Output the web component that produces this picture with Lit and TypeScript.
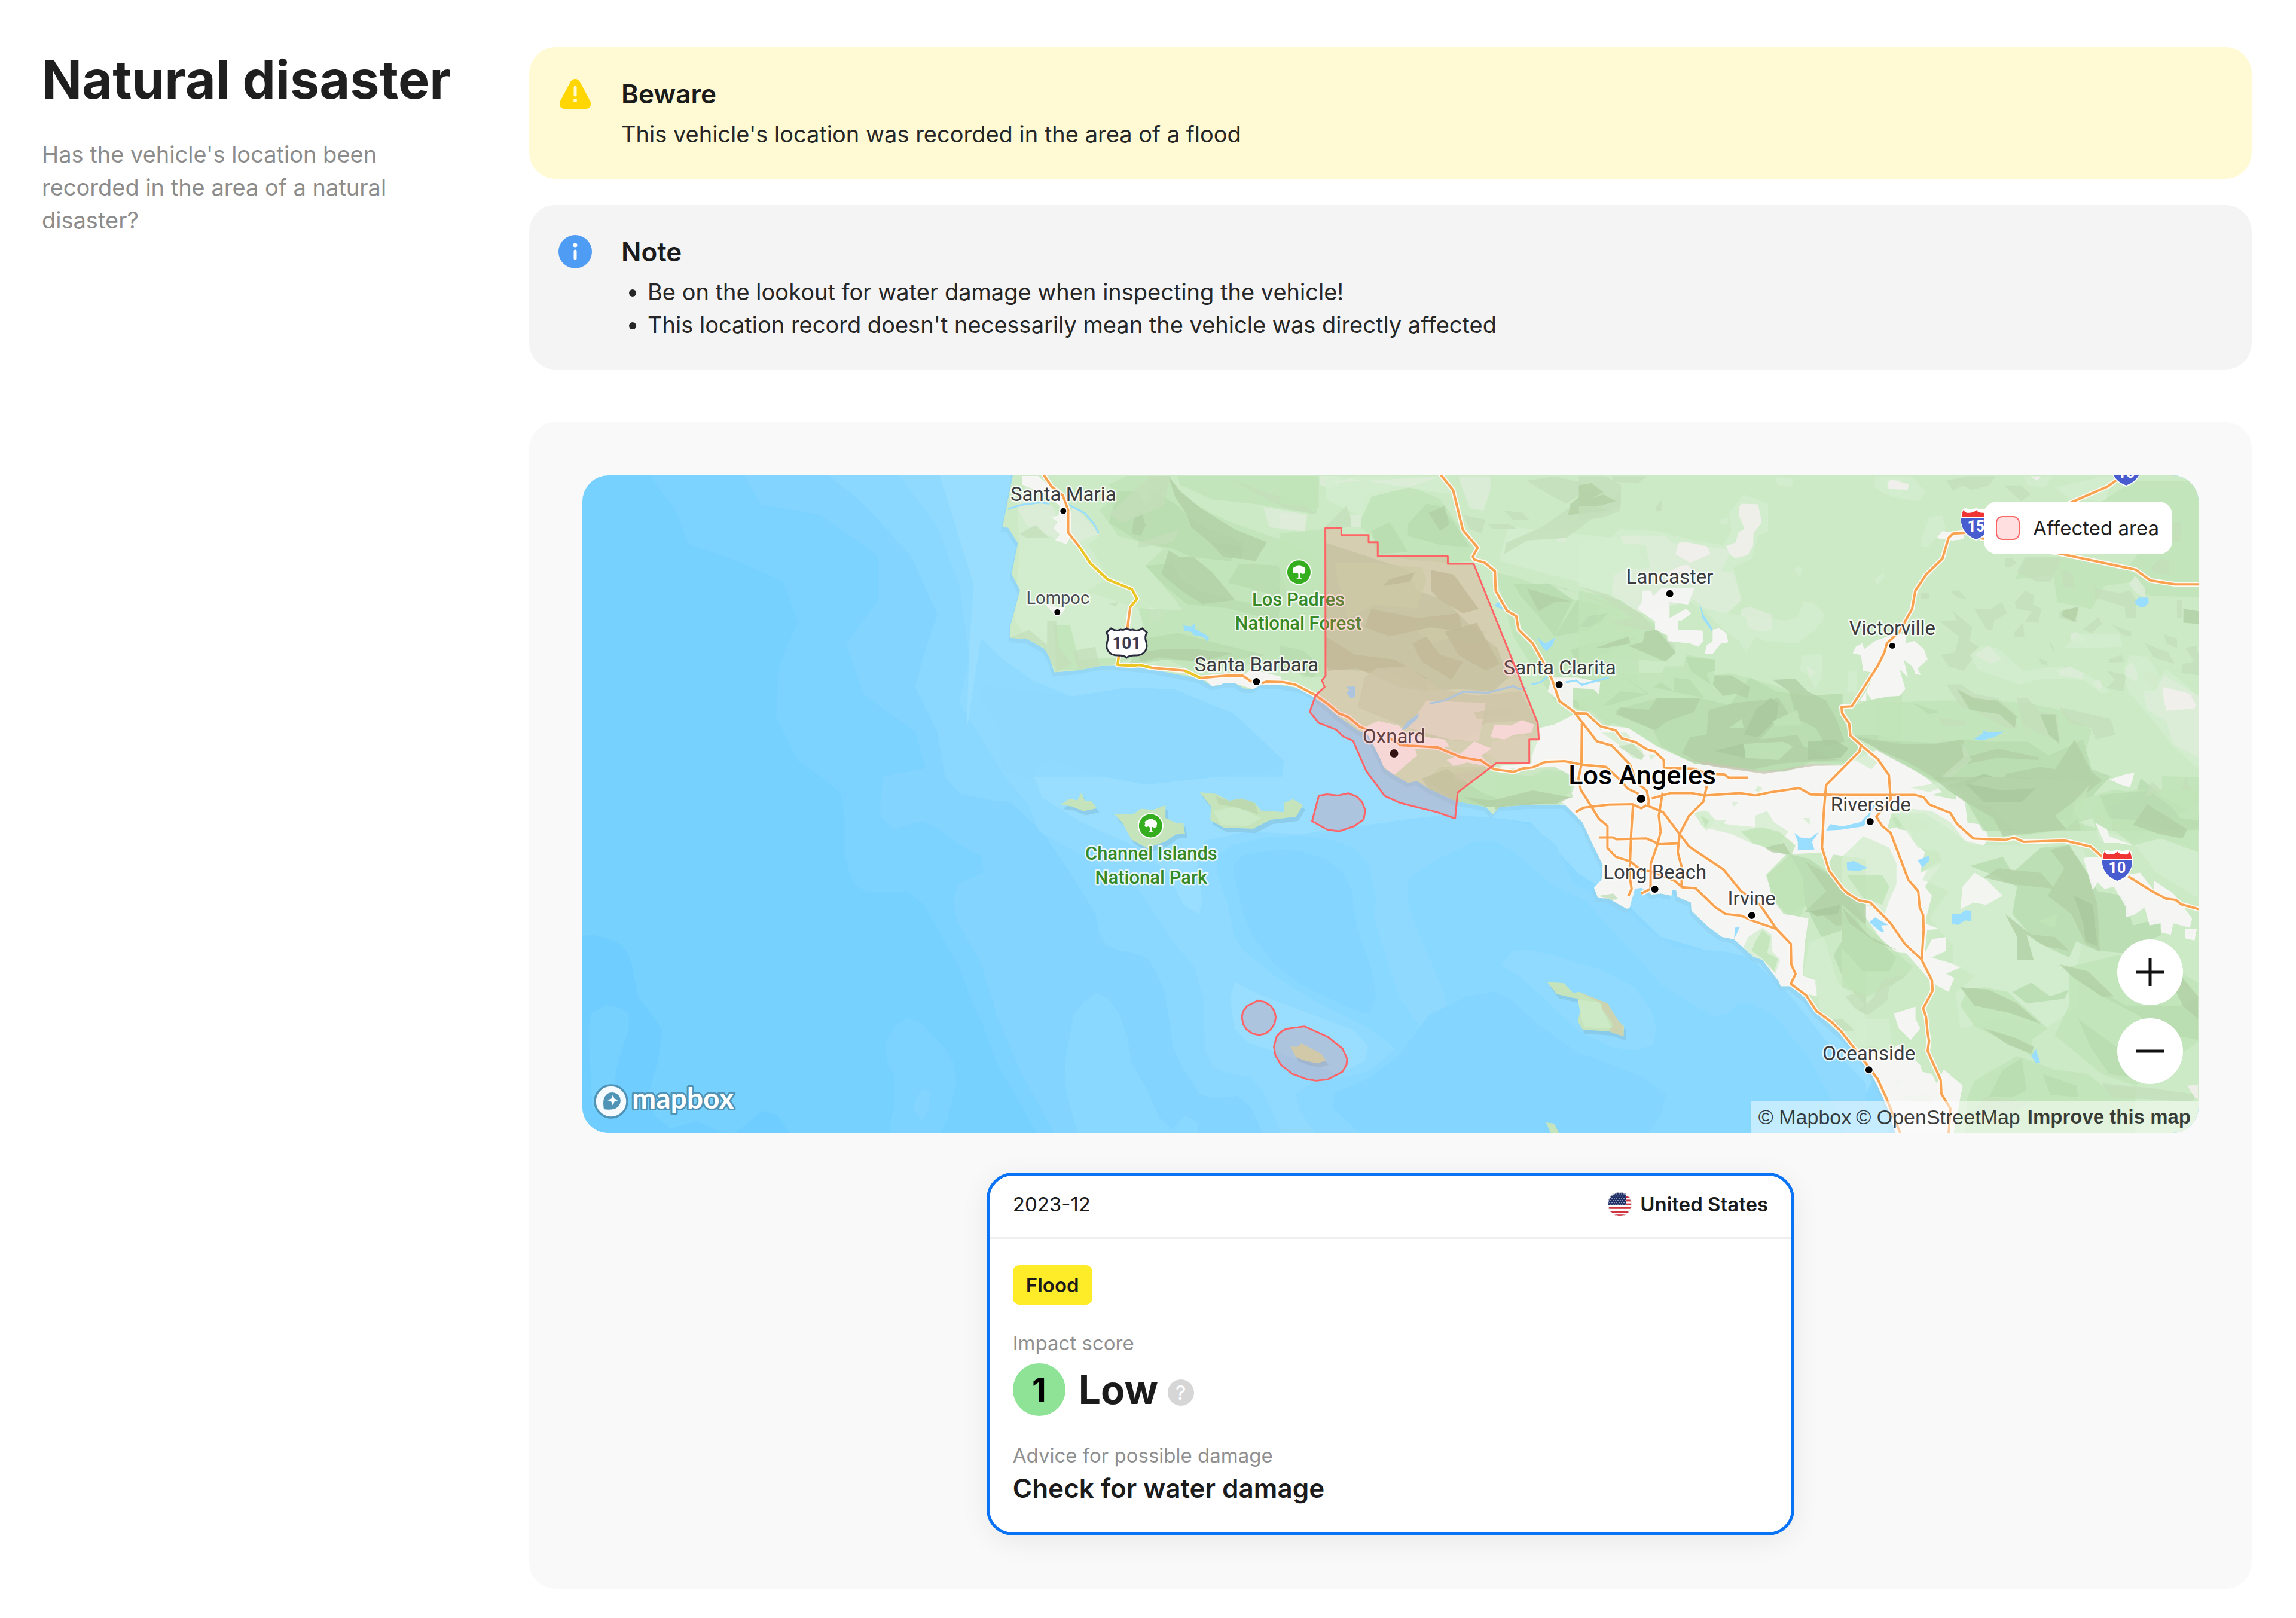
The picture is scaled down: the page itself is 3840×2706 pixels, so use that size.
import { LitElement, html, css, svg } from "lit";
import { customElement, property } from "lit/decorators.js";

/* ---------- map geometry ---------- */

type Sheet = [number, number, number, number];

/* Survey sheets: origin x, origin y and units per grid step on each axis. */
const A: Sheet = [1640, 790, 0.38265, 0.35714];
const B: Sheet = [2140, 790, 0.38265, 0.38265];
const C: Sheet = [2640, 790, 0.34439, 0.38265];
const D: Sheet = [3140, 790, 0.35714, 0.38265];
const E: Sheet = [2500, 1300, 0.39541, 0.38265];
const F: Sheet = [3080, 1300, 0.39541, 0.38265];
const G: Sheet = [1640, 1300, 0.44643, 0.38265];
const H: Sheet = [960, 1300, 0.44643, 0.39541];
const W: Sheet = [0, 0, 2.449, 2.449];

/* Converts "x,y x,y" on a sheet into map coordinates. */
const on = (s: Sheet, pts: string): string =>
  pts
    .trim()
    .split(/\s+/)
    .map((p) => {
      const [x, y] = p.split(",").map(Number);
      return `${(s[0] + x * s[2]).toFixed(1)},${(s[1] + y * s[3]).toFixed(1)}`;
    })
    .join(" ");

const join = (...parts: string[]) => parts.join(" ");

const land = join(
  on(A, "140,0 140,18 95,260 120,262 162,335 135,480 172,555 130,720 130,778 205,785 280,830 300,870 322,940 430,930 520,910 590,908 740,925 960,970 1010,1003 1045,1000 1060,990 1110,990 1150,1015 1190,1018 1230,995 1310,1000 1400,1015 1470,1055"),
  on(B, "165,990 250,1065 340,1130 385,1150 415,1205 440,1255 455,1295 500,1325 560,1360 600,1352 650,1385 770,1440 900,1465 930,1498 960,1465 1100,1455"),
  on(E, "295,122 370,200 410,290 455,385 450,450 418,485 435,530 480,532 555,577 568,575 580,530 590,500 640,490 660,515 700,510 745,520 750,495 765,495 770,525 828,550 830,585 900,655 960,700 1010,710 1090,785 1130,800 1200,895 1207,915 1250,915 1315,970 1355,1030 1450,1115"),
  on(F, "0,1130 60,1200 110,1270 150,1350 190,1440 230,1568"),
  "3150,1960 3800,1960 3800,700"
);

const seaBands: [string, string][] = [
  ["#6fceff", join(on(H, "0,670 70,668 120,682 170,705 200,740 218,800 240,930 332,1070 315,1200 280,1340 300,1430 360,1487 460,1455 545,1500 600,1510 705,1412 760,1430 810,1510 0,1510"))],
  ["#77d1ff", on(H, "65,1000 120,965 165,975 205,1000 205,1070 165,1200 148,1310 130,1400 68,1400 55,1080")],
  ["#7cd3ff", join(on(W, "440,320 462,350 470,372 505,384 535,398 545,425 532,455 530,490 545,520"), on(H, "925,0 1000,70 1015,170 1015,330 1030,400 1050,455 1095,485 1250,485 1310,540 1440,800"), on(G, "-20,1020 0,1060 60,1250 215,1568 1568,1568 1568,0"), "2400,700 1000,700")],
  ["#7cd3ff", on(H, "1165,1130 1200,1055 1250,1020 1300,1042 1390,1150 1422,1210 1432,1290 1400,1440 1370,1510 1180,1510 1200,1380 1200,1265 1172,1205")],
  ["#83d4ff", on(H, "1310,1318 1333,1333 1330,1400 1303,1460 1270,1400 1285,1350")],
  ["#83d4ff", join(on(W, "505,320 520,345 560,352 600,380 600,410 578,440 590,475 625,500 632,525"), on(H, "1157,0 1145,140 1155,180 1200,220 1300,188 1360,215 1440,285 1525,335 1535,405 1440,450 1420,530 1435,610 1530,800"), on(G, "0,810 60,1040 150,1290 280,1568 3600,1568 3600,0"), "3000,700")],
  ["#89d8ff", on(G, "430,945 480,970 520,1040 550,1140 565,1250 620,1360 670,1490 715,1540 765,1480 810,1510 815,1568 365,1568 320,1370 315,1250 348,1040 385,985")],
  ["#8ad8ff", join(on(W, "560,320 590,345 622,380 640,420 630,450 625,470 640,500"), on(H, "1390,0 1450,75 1568,100"), on(G, "110,110 230,240 330,410 430,600 445,690 470,735 510,757 570,768 625,795 655,850 690,940 720,1180 760,1280 820,1385 870,1405 960,1395 1010,1440 1060,1568 3400,1568 3400,0"), "3000,700")],
  ["#91daff", join(on(W, "610,320 640,360 655,400 662,450 655,480"), on(G, "90,0 180,125 220,240 360,330 590,490 720,720 800,830 835,970 840,1190 870,1270 930,1295 1010,1310 1060,1380 1130,1568 1260,1568 1195,1460 1180,1385 1240,1340 1450,1290 1560,1180 1568,0"), "2900,900 2900,700")],
  ["#99deff", join(on(W, "640,320 665,400 662,440 660,500"), on(A, "0,780 100,880 230,980 400,1052 660,1010 850,1020 1110,1135 1325,1355"), on(B, "0,1420 250,1390 500,1568 700,1568 1000,1500"), on(E, "0,180 150,200 350,420 560,560 700,700 900,760 1080,800 1300,1050 1568,1380"), "3300,1500 3000,900 2000,700")],
  ["#99deff", on(G, "200,0 230,90 370,195 590,310 700,420 760,560 818,602 830,540 810,400 840,280 1000,240 1200,250 1568,190 1568,0")],
  ["#8fd9ff", on(A, "400,1052 640,1010 850,1020 1110,1135 1325,1355 1280,1400 1000,1432 720,1466 500,1418 310,1348 250,1370 230,1430 200,1440 90,1400 85,1200 0,1070 0,1000")],
  ["#8fd9ff", join(on(G, "1240,262 1300,245 1568,190"), on(E, "-200,165 0,180 150,210 260,300 330,470 540,560 620,650 760,745 980,765 1080,790 1250,960 1420,1180 1568,1340 1568,1568 0,1568"), on(G, "1568,1190 1400,1000"))],
  ["#89d8ff", join(on(G, "885,420 888,345 940,300 1080,262 1200,258 1300,272 1400,310 1450,380"), on(G, "1480,520 1475,620 1500,720 1535,850 1568,960 1650,1100 1780,1180 1740,960 1640,680 1600,560 1600,450 1680,380"), on(E, "-80,280 0,280 80,330 250,480 380,540 520,700 640,830 700,910 920,1045 975,1040 1030,990 1080,990 1180,1040 1330,1230 1430,1430 1480,1568 -200,1568"), on(G, "1568,1200 1450,1095 1250,980 1100,870 980,755 948,690 925,560"))],
  ["#84d5ff", on(G, "950,380 985,340 1110,320 1200,325 1290,360 1360,420 1390,500 1410,660 1465,850 1480,960 1455,1038 1400,1020 1200,910 1100,820 1020,700 985,600 945,420")],
  ["#99deff", on(G, "950,895 1030,945 1400,1110 1450,1175 1440,1240 1340,1300 1200,1240 1000,1160 950,1100 935,970")],
  ["#91daff", on(E, "25,825 70,765 140,755 260,785 440,840 590,920 660,1020 680,1100 670,1170 600,1195 500,1185 350,1110 200,960 100,870")],
  ["#84d5ff", join(on(G, "1430,1568 1320,1450 1325,1380 1450,1320 1568,1215"), on(E, "-280,1040 -120,960 0,940 60,965 180,1080 340,1200 620,1310 722,1385 700,1480 640,1568"))],
];

const cities: string[] = [
  join(on(B, "1285,1060 1200,1105 1135,1120 1125,1170 1100,1180 1100,1275 960,1285 1000,1320 1100,1330 1160,1300 1240,1310 1290,1350 1280,1400 1200,1430 1240,1450"), on(E, "200,150 250,700 900,1000 1250,930 1360,960 1360,890 1300,870 1310,720 1325,620 1230,600 1180,540 1145,430 1230,340 1400,330 1400,400 1440,440 1500,520 1568,560"), on(F, "90,600 200,760 270,770 380,900 450,940 475,880 440,860 510,830 380,790 440,760 440,700 380,710 350,770 360,670 410,665 350,640 380,520 350,480 420,380 330,420 350,330 300,280 280,210 190,230 210,160 350,160 470,240 530,290 600,300 620,270 600,210 530,200 520,110 490,65 480,100 380,80"), on(D, "300,1400 230,1340 120,1275 0,1215"), on(C, "1450,1215 1340,1260 1300,1285 1130,1275 1000,1310 880,1310 650,1275 560,1275 380,1200 240,1120 130,1110 90,1045 0,1045")),
  on(C, "310,520 350,520 360,545 400,510 560,510 530,580 440,570 440,640 520,600 545,620 500,650 480,650 480,690 600,695 605,740 580,765 540,750 430,740 430,715 370,690 370,655 285,600 305,570"),
  on(C, "650,690 680,685 715,705 725,745 690,750 650,795 612,795 620,760 650,740"),
  join(on(C, "1330,795 1345,765 1375,750 1385,775 1440,740 1500,720 1568,710"), on(D, "130,700 130,750 170,740 215,775 232,820 185,860 200,888 175,885 165,855 120,820 140,900 100,860 128,950 100,980 0,985"), on(C, "1490,985 1420,995 1395,960 1395,1000 1365,1000 1395,960 1440,880 1380,870 1370,800")),
  on(B, "1190,900 1300,900 1400,920 1395,975 1370,950 1280,945 1280,1040 1230,1010 1170,960"),
  on(A, "180,20 250,20 330,95 370,150 395,190 395,300 375,340 325,320 345,295 318,265 335,235 310,215 340,205 345,160 280,100 240,85 180,60"),
  on(A, "980,975 1060,950 1150,955 1180,925 1310,960 1310,1000 1230,995 1190,1018 1110,990 1010,1003"),
  on(A, "280,620 370,640 350,672 320,665"),
  on(B, "385,1110 430,1090 520,1110 560,1150 720,1170 740,1200 590,1210 600,1240 540,1290 500,1325 455,1290 410,1200 370,1140"),
  on(B, "920,1160 940,1105 1010,1110 1060,1085 1110,1105 1100,1140 1020,1150 980,1170"),
  on(B, "780,1240 850,1180 925,1210 880,1240 920,1290 820,1270 760,1285 730,1260"),
  on(F, "510,480 560,420 610,450 680,520 610,560 555,550 500,580"),
  on(F, "1020,355 1100,350 1190,430 1260,420 1320,500 1320,455 1400,510 1480,620 1470,660 1400,640 1390,690 1350,680 1350,640 1300,650 1280,570 1240,600 1200,615 1200,570 1150,480 1110,490 1080,460 1060,495"),
  on(F, "1070,200 1120,230 1130,260 1230,300 1170,290 1110,290"),
  on(F, "1450,665 1500,665 1490,715 1450,705"),
  on(F, "220,1035 310,1005 310,1060 330,1100 290,1150 240,1100"),
  on(F, "0,1120 60,1190 200,1200 240,1170 330,1260 340,1290 380,1300 400,1340 430,1280 510,1350 500,1400 470,1568 230,1568 100,1260"),
  on(F, "1130,10 1190,0 1230,10 1215,45 1180,35"),
  on(D, "275,290 300,260 350,265 400,255 400,295 350,300"),
  on(D, "1085,1345 1150,1325 1200,1315 1190,1345 1180,1380 1150,1370"),
];

const P = "#d3edce", Q = "#dfecda", S = "#c0e4b8", T = "#b8dbb0", U = "#b1cfa5", V = "#a9c89c", K = "#c3dfba", N = "#f6eff0", R = "#c9c7b4";

const terrain: [Sheet, string, string][] = [
  [A, P, "160,180 330,180 520,300 470,340 560,500 460,560 690,640 760,900 320,930 200,780 150,700 170,340"],
  [A, Q, "200,60 320,170 340,320 200,250 160,170"], [A, Q, "400,150 520,290 420,330 390,280"],
  [A, Q, "1235,165 1425,200 1415,280 1260,260"], [A, Q, "735,635 800,650 790,700 735,710"],
  [A, Q, "1480,20 1568,20 1568,60 1530,80 1480,60"],
  [A, S, "520,180 590,110 560,60 640,20 820,20 900,130 1000,190 1080,230 1260,300 1360,330 1480,420 1500,900 1200,900 960,780 850,600 720,440 800,360 600,300"],
  [A, S, "690,640 880,650 960,780 1200,900 920,930 760,850 590,900 430,930 330,930 320,720 390,720 430,880 600,870 720,760"],
  [A, S, "870,60 1010,130 1190,150 1470,200 1470,20 860,20"],
  [A, T, "560,240 600,90 680,90 720,160 760,90 860,160 930,230 1000,270 1150,330 1090,420 920,400 840,360 700,330 620,280"],
  [A, T, "720,440 840,430 870,500 960,560 1100,600 1200,620 1320,540 1300,700 1080,640 900,620 800,530"],
  [A, T, "1130,430 1300,440 1350,600 1220,560 1080,520"],
  [A, T, "720,780 860,755 1060,810 1250,860 1000,890 800,880 640,910"],
  [A, U, "820,20 870,90 960,170 1110,270 1250,330 1200,420 1100,400 1000,330 920,260 900,200 850,120"],
  [A, U, "820,370 870,400 930,400 1010,470 1080,560 1110,600 970,620 880,560 790,480"],
  [A, U, "670,210 700,180 720,250 700,300 660,290"], [A, U, "1000,330 1150,350 1140,410 1060,400"],
  [A, U, "680,850 800,830 930,830 1100,850 960,890 780,870 700,890"],
  [A, K, "620,240 800,160 830,20 760,20 700,60 560,200"], [A, K, "730,20 820,20 800,100 740,110"],
  [A, K, "1100,40 1250,130 1330,170 1460,200 1400,130 1280,110 1180,70"],
  [A, K, "130,778 210,740 290,810 290,700 330,700 340,820 400,900 330,940 270,820"],
  [A, K, "170,290 240,250 300,310 200,310"], [A, K, "560,620 600,610 590,630"], [A, K, "810,290 870,270 840,330 690,355 690,330"],
  [A, K, "400,840 500,820 520,910 430,930"],
  [B, S, "170,160 0,140 0,20 170,20"], [B, S, "0,270 200,250 200,900 0,830"],
  [B, S, "370,100 560,60 700,120 800,260 860,340 840,390 735,400 430,370 400,280 350,240"],
  [B, S, "940,440 1060,470 1290,560 1500,600 1568,650 1568,1030 1400,1130 1340,1050 1200,1000 1020,720"],
  [B, S, "0,560 200,500 200,900 100,900 0,760"],
  [B, P, "1000,240 1568,300 1568,580 1300,480 1100,430 960,390 980,300"],
  [B, P, "200,20 720,20 750,100 560,70 400,110 360,200 200,120"], [B, Q, "210,50 700,20 560,70 310,30"],
  [B, Q, "780,20 920,20 920,80 890,170 830,160 800,80"], [B, Q, "0,180 120,190 110,260 0,250"],
  [B, Q, "1450,440 1568,420 1568,570 1460,540"], [B, Q, "300,190 355,190 355,240 300,245"],
  [B, Q, "1210,280 1250,270 1250,310 1210,305"], [B, Q, "1490,280 1568,270 1568,320 1500,315"],
  [B, K, "980,360 990,310 1150,240 1260,160 1380,170 1490,80 1490,150 1360,210 1250,290 1080,300"],
  [B, K, "1080,40 1200,20 1330,50 1300,110 1250,140 1160,90"], [B, U, "1270,140 1350,80 1430,110 1380,150 1430,170 1260,190"],
  [B, K, "800,190 900,210 880,270 830,250"], [B, K, "910,230 1000,230 1040,250 930,250"], [B, K, "980,170 1060,180 1090,210 1020,210"],
  [B, T, "560,230 640,140 700,150 760,220 830,330 700,320 560,280"], [B, T, "400,260 480,220 560,350 440,360"],
  [B, U, "650,180 720,150 740,230 700,260"], [B, K, "1010,450 1130,480 1568,610 1450,590 1250,510"],
  [B, T, "1020,490 1180,490 1280,560 1200,720 1130,630 1050,540"], [B, T, "1300,560 1400,580 1370,690 1200,720"],
  [B, U, "1080,510 1280,570 1200,570 1130,610"], [B, T, "1270,780 1350,750 1568,720 1440,790 1300,840"],
  [B, T, "0,760 100,780 180,850 150,900 0,860"], [B, T, "1170,960 1300,1000 1400,1110 1350,1060 1250,1010"],
  [B, K, "205,255 200,240 290,150 310,200 310,240"],
  [B, T, "200,310 560,430 600,520 720,560 860,700 950,770 1000,900 930,960 780,950 640,960 480,870 340,870 200,860"],
  [B, S, "240,400 430,400 620,420 640,470 600,600 420,580 300,640 260,500"],
  [B, S, "560,660 660,640 900,700 880,760 730,730 660,750"],
  [B, U, "400,600 600,640 780,620 800,700 660,680 480,720 370,680"], [B, U, "200,720 330,800 500,820 640,900 640,960 520,940 340,860 210,870"],
  [B, U, "660,430 760,450 870,600 800,620 700,560 660,520"], [B, U, "720,700 860,660 960,840 900,870 780,800"],
  [B, U, "580,750 640,720 700,800 800,830 750,910 620,830"], [B, U, "480,470 590,440 570,480 450,500"],
  [B, K, "420,860 560,850 700,950 860,980 1050,960 1130,1110 1060,1085 900,1100 800,1180 640,1160 560,1120 340,1030 370,900"],
  [B, Q, "640,1000 900,1010 870,1180 740,1170 560,1120"], [B, K, "850,1050 1000,1030 1020,1070 860,1080"],
  [B, P, "930,1180 1060,1150 1130,1170 1090,1270 960,1270 900,1230"],
  [B, S, "960,1300 1200,1290 1300,1340 1240,1430 1100,1455 960,1465 870,1460 770,1440 640,1350 700,1290 900,1290"],
  [B, T, "620,1340 730,1300 880,1400 960,1430 1100,1430 900,1465 770,1440 650,1385"],
  [B, U, "800,1420 900,1435 1240,1440 1100,1455 960,1465 900,1465"],
  [B, K, "770,1320 880,1300 850,1350 760,1350"],
  [C, K, "0,20 130,20 205,60 200,170 120,200 0,210"], [C, U, "0,60 60,50 120,90 50,120 120,100 180,130 100,150 0,150"],
  [C, K, "370,160 400,125 400,170 380,175"], [C, K, "160,20 330,20 290,48 170,45"],
  [C, P, "0,310 140,300 200,250 380,260 560,300 700,320 740,260 730,180 800,100 920,140 920,260 870,280 840,380 750,420 790,560 720,620 1000,650 1060,640 1090,570 1140,570 1200,630 1150,690 1060,750 900,740 860,720 810,790 780,740 700,690 600,600 400,500 230,640 150,560 0,500"],
  [C, Q, "200,280 420,280 450,310 640,330 740,340 690,440 750,440 790,560 720,620 620,600 560,560 300,620 160,540 165,460 210,430 345,420 325,320 215,315"],
  [C, N, "470,360 485,310 510,305 620,325 640,360 540,398"], [C, N, "780,150 790,140 870,143 888,220 848,270 845,325 820,365 760,378 735,365 715,325 760,310 775,265 805,250 775,190"],
  [C, N, "430,440 500,410 530,408 560,440"], [C, P, "1080,800 1180,795 1180,900 1150,950 1110,890 1075,870"], [C, Q, "1105,850 1150,875 1120,900"],
  [C, Q, "790,600 830,590 940,625 935,690 880,700 820,680 815,640 785,625"], [C, P, "950,35 980,20 1040,30 1035,65 970,60"], [C, P, "1045,430 1060,410 1085,420 1075,460"], [C, P, "1435,470 1480,440 1485,460 1450,495"],
  [C, P, "680,210 730,200 720,230 690,230"], [C, P, "1310,870 1350,870 1350,970 1300,960"],
  [C, P, "1430,60 1440,20 1568,20 1568,110 1480,100"], [C, N, "1498,45 1520,32 1568,40 1568,80 1510,75"],
  [C, S, "0,520 200,560 400,690 470,790 400,830 180,810 100,830 0,840"],
  [C, S, "0,1000 100,950 100,910 220,880 400,880 420,850 510,850 520,800 650,820 660,890 730,880 900,920 1100,980 1280,970 1250,1050 1290,1080 1310,1160 1360,1210 1300,1280 1130,1275 1000,1310 880,1310 650,1275 560,1275 380,1200 240,1120 100,1080 60,1040 0,1040"],
  [C, K, "0,500 150,540 300,620 380,700 470,760 460,790 350,700 160,660 260,640 100,540"], [C, U, "80,770 240,720 250,750 130,770"],
  [C, U, "320,700 380,690 470,790 420,830 240,760 310,745"], [C, T, "0,680 50,630 140,620 100,660 40,680"],
  [C, T, "520,810 660,820 660,870 620,880 640,930 540,870"], [C, T, "360,940 400,920 460,960 460,900 540,910 610,990 450,960"], [C, T, "120,1020 200,960 330,970 210,890 340,970 150,1020"],
  [C, T, "180,1040 380,990 590,990 730,1020 830,900 960,960 1100,980 1280,970 1280,1080 1310,1140 1360,1210 1300,1270 1120,1270 1000,1310 850,1310 560,1275 400,1200 360,1130 180,1050"],
  [C, U, "380,990 590,990 560,1050 430,1090 370,1130 180,1060 200,1030 340,1040"], [C, U, "660,890 740,890 830,940 820,990 760,970 700,980 650,930"],
  [C, U, "630,1040 760,1010 970,990 1020,1060 950,1100 880,1170 1060,1150 1090,1200 1260,1260 1140,1265 980,1275 850,1300 600,1280 500,1230 540,1160 620,1150"],
  [C, U, "940,910 1050,905 1110,960 1200,1000 1250,1080 1290,1180 1200,1200 1150,1120 1060,1080 1020,960"],
  [C, V, "860,1040 930,990 970,1010 960,1080 870,1160 800,1150"], [C, V, "1110,1180 1240,1170 1310,1210 1270,1250 1110,1260"], [C, V, "660,1220 790,1190 900,1200 800,1250"],
  [C, S, "800,1190 990,1180 1040,1200 970,1260 810,1250"], [C, S, "940,1090 1060,1040 1080,1110 950,1110"], [C, S, "730,1120 790,1080 800,1120"],
  [C, R, "520,1255 660,1290 900,1320 1140,1285 1300,1283 1140,1275 980,1302 880,1308 640,1272"],
  [C, P, "110,1140 230,1140 310,1220 310,1260 260,1250 190,1190"], [C, K, "190,1200 260,1190 320,1240 300,1260"], [C, P, "340,1240 385,1230 350,1260"],
  [C, P, "560,1490 610,1480 660,1530 620,1568 590,1540"], [C, P, "1340,1260 1380,1225 1450,1270 1420,1300"], [C, P, "850,1385 895,1385 870,1400"],
  [C, S, "1290,1040 1400,1000 1568,970 1568,1250 1440,1200 1330,1160 1320,1100"], [C, T, "1330,1150 1450,1150 1568,1180 1568,1230 1450,1215"], [C, U, "1330,1155 1450,1175 1568,1190 1568,1250 1450,1210"],
  [D, P, "20,20 160,20 225,90 190,130 60,110"], [D, N, "45,50 60,33 145,55 140,80 50,75"], [D, P, "680,20 820,20 780,70 700,60"], [D, N, "715,20 765,20 745,40"],
  [D, P, "200,300 240,200 300,190 320,250 270,290 235,330 200,325"], [D, P, "830,70 1050,20 1110,20 1060,130 900,120"],
  [D, S, "1050,130 1200,40 1501,40 1501,550 1260,540 1200,480 1060,500 1000,600 840,570 820,450 640,470 700,380 860,370 1170,420 1240,330"],
  [D, K, "320,40 420,20 550,20 520,60 440,80 400,60 350,80"], [D, K, "590,60 670,60 715,100 670,130"], [D, K, "690,370 860,380 810,480 740,480 700,460 650,440"], [D, K, "595,380 630,380 650,400 620,415 595,415"],
  [D, K, "865,430 915,450 915,510 865,500"], [D, K, "1015,510 1130,530 1180,520 1210,560 1205,640 1160,640 1155,590 1015,550"], [D, K, "340,520 380,520 415,555 370,550"], [D, K, "200,530 240,530 240,555 200,555"],
  [D, K, "450,600 530,600 580,570 605,620 545,650 535,690 510,690"], [D, K, "290,655 370,650 350,610 440,680 430,740 480,770 400,870 330,850 295,800 360,790 380,720"], [D, K, "640,570 690,520 730,540 725,580 765,600 750,660 690,655 720,610 650,600"],
  [D, K, "850,610 940,600 930,660 850,640"], [D, K, "960,690 1030,635 1050,665 1000,705"], [D, K, "1095,670 1185,700 1185,720 1150,715"], [D, K, "640,700 680,660 685,720 640,725"], [D, U, "870,605 940,590 920,655 860,630"],
  [D, K, "1250,750 1360,790 1390,840 1290,810"], [D, K, "1340,710 1400,730 1400,770 1350,750"], [D, K, "1080,820 1140,800 1155,830 1080,835"], [D, K, "1250,880 1310,890 1310,940 1290,950 1250,910"], [D, K, "1070,870 1160,890 1150,960 1070,945 1110,910"],
  [D, K, "800,740 820,760 825,790"], [D, K, "755,815 795,830 790,845 765,840"], [D, K, "1400,560 1425,560 1425,640 1400,640"], [D, U, "1430,600 1501,610 1501,665 1430,660"], [D, K, "1280,420 1320,380 1360,385 1360,450 1290,440"],
  [D, K, "1440,770 1490,760 1501,800 1501,890 1420,880 1425,840 1480,830"], [D, K, "1380,220 1420,220 1415,300 1380,310"],
  [D, P, "430,800 480,760 560,770 680,870 850,850 970,880 1090,960 1050,970 960,910 770,905 660,930 540,890 470,870"], [D, Q, "450,800 520,760 580,820 530,840"], [D, Q, "840,870 900,850 960,880 960,905 850,890"], [D, Q, "900,710 930,700 975,730 960,745 905,740"],
  [D, P, "870,770 950,710 1130,710 1145,765 1000,770"], [D, P, "1150,860 1180,800 1260,810 1300,860 1320,900 1350,860 1501,980 1501,1300 1380,1200 1300,1100 1170,960"], [D, Q, "1240,960 1300,960 1340,890 1501,980 1501,1250 1380,1190 1350,1090 1260,1040"],
  [D, N, "1335,940 1460,970 1490,1020 1480,1035 1350,1045 1335,980"], [D, Q, "1175,490 1205,455 1250,510 1250,550 1210,530"], [D, Q, "1005,920 1040,905 1050,940 1030,955"], [D, Q, "1160,860 1190,830 1215,880 1210,920 1160,890"],
  [D, S, "0,1010 300,1000 500,1000 700,1010 850,1040 1000,1130 960,1260 1010,1340 900,1450 950,1568 490,1568 390,1400 260,1350 130,1270 0,1215"],
  [D, K, "320,930 390,930 450,970 560,990 640,1050 650,1120 600,1120 440,1040 390,1030"], [D, U, "370,950 450,990 560,1000 650,1070 640,1120 570,1060 430,1040"], [D, K, "650,990 700,990 760,1050 840,1060 850,1180 800,1160 750,1140 680,1110"],
  [D, U, "760,1060 830,1060 850,1190 800,1150"], [D, K, "850,1030 1090,1080 1110,1150 1020,1170 1000,1120 900,1100"], [D, K, "285,1075 410,1090 410,1110 300,1110"], [D, T, "160,1010 290,1050 240,1060"],
  [D, T, "0,1175 270,1185 400,1170 500,1180 700,1180 800,1240 960,1170 1000,1300 1090,1330 1000,1420 900,1450 980,1568 500,1568 380,1390 260,1350 0,1220"],
  [D, U, "0,1175 110,1190 270,1190 400,1170 400,1250 560,1210 760,1250 750,1260 560,1250 400,1280 290,1350 130,1265 0,1215"],
  [D, U, "600,1320 760,1290 830,1300 920,1170 1000,1310 1050,1350 930,1440 900,1530 700,1490 540,1480 400,1390 560,1400"], [D, V, "400,1350 500,1320 590,1350 570,1370 420,1370"], [D, V, "540,1460 690,1450 800,1390 830,1430 740,1480"], [D, K, "300,1330 400,1250 390,1180 440,1260 320,1350"],
  [D, S, "1330,1330 1501,1335 1501,1568 950,1568 920,1440 1100,1390 1200,1400 1330,1390"], [D, T, "1230,1340 1350,1430 1501,1500 1501,1568 1100,1568 1090,1460 1210,1400"], [D, K, "1420,1390 1440,1330 1470,1400"],
  [D, P, "440,1340 360,1350 150,1380 240,1400 330,1370"],
  [E, S, "0,0 300,0 330,90 240,110 40,120 0,140"], [E, U, "0,100 160,60 320,90 260,118 50,125 0,145"],
  [E, P, "840,160 900,150 940,200 1000,210 1100,220 1100,170 1150,150 1180,200 1240,240 1180,320 1080,290 1000,250 880,220"], [E, S, "870,170 905,190 890,220"], [E, S, "1040,240 1120,220 1200,240 1270,300 1250,350 1150,310 1090,290"], [E, U, "1140,310 1220,290 1250,340 1170,330"],
  [E, T, "1150,430 1250,340 1330,360 1450,450 1568,640 1568,1000 1480,900 1430,780 1500,660 1380,700 1310,560 1240,600 1180,540"], [E, S, "1150,430 1250,345 1300,440 1310,560 1290,610 1220,600 1170,530"], [E, U, "1310,370 1450,450 1480,500 1568,560 1568,640 1440,650 1380,600 1310,590 1400,500"], [E, V, "1330,590 1460,560 1450,600 1360,610"],
  [E, S, "1400,400 1430,340 1568,360 1568,540 1500,510 1430,450"], [E, P, "1300,870 1330,720 1390,700 1450,900 1568,1000 1568,1250 1460,1110 1370,1010 1350,880"], [E, K, "1480,960 1540,940 1568,960 1568,1040 1520,1010"], [E, K, "1420,1060 1470,1060 1520,1110 1460,1110"],
  [E, P, "1070,700 1130,660 1170,690 1170,760 1205,800 1185,860 1130,800 1090,785 1050,745"], [E, S, "1100,720 1130,670 1165,700 1150,770 1195,795 1180,850 1130,795 1085,760"], [E, K, "440,520 500,510 520,535 480,540"],
  [E, P, "1110,40 1130,50 1100,65"], [E, P, "1000,110 1030,110 1010,130"], [E, P, "930,190 975,190 960,220"], [E, P, "1300,180 1330,180 1330,210"],
  [F, S, "210,180 290,170 390,220 310,240 240,230"], [F, P, "200,130 380,150 460,200 520,280 600,300 800,300 1020,310 1030,350 1060,500 1000,800 1000,1000 860,1100 700,1050 500,1100 480,950 560,870 470,820 470,740 430,690 370,620 450,500 340,450 370,390 420,370 410,330 320,310"],
  [F, P, "0,350 90,260 200,310 230,380 230,470 200,540 180,600 100,560 0,480"], [F, S, "20,430 170,430 200,480 170,560 90,530"],
  [F, P, "1000,200 1060,180 1090,280 1240,300 1330,420 1505,530 1505,120 1230,280"], [F, S, "620,130 760,260 940,230 1000,180 1050,20 600,0 470,70 530,110"], [F, U, "380,0 700,0 1060,20 980,110 900,170 950,230 680,260 640,180 520,110 450,60"], [F, V, "520,30 680,60 820,50 760,110 600,110"],
  [F, S, "1080,90 1230,60 1505,60 1505,330 1350,270 1230,300 1150,230 1060,170"], [F, T, "1090,80 1300,60 1390,130 1430,180 1505,190 1505,230 1350,240 1250,190 1130,180"], [F, U, "1290,120 1460,230 1440,270 1340,250 1230,210"], [F, K, "1280,90 1310,20 1350,60"],
  [F, T, "540,390 680,350 720,420 840,310 960,300 1040,420 1080,500 1190,520 1230,650 1340,620 1350,690 1200,770 1080,760 990,720 960,790 820,720 720,600 740,480 640,430"], [F, U, "880,320 960,300 1040,430 1080,560 1090,760 1030,730 970,600 870,520 940,400"], [F, U, "600,440 660,400 840,420 900,490 720,470"], [F, V, "980,520 1060,560 1080,740 1030,720 1020,640"],
  [F, U, "690,600 800,690 900,700 960,760 860,740 780,690 810,800 740,800 740,700"], [F, S, "830,630 910,600 900,660"],
  [F, S, "530,930 600,920 700,940 870,1100 800,1150 820,1230 700,1160 560,1090 500,1000"], [F, U, "500,920 620,930 740,990 840,1080 700,1030 560,1000"], [F, U, "600,1100 730,1140 810,1180 800,1210 700,1170"], [F, T, "720,940 800,900 880,960 960,930 940,970 780,990"],
  [F, S, "960,830 1170,780 1440,860 1505,900 1505,1160 1240,1350 1100,1300 900,1130 960,1000"], [F, T, "1000,880 1200,1000 1440,1000 1505,960 1505,1150 1350,1120 1250,1040 1080,950"], [F, U, "1380,870 1440,880 1505,960 1505,1060 1440,1000"], [F, T, "1000,1060 1160,1180 1250,1320 1130,1300 1050,1180"], [F, U, "920,820 1040,850 1150,960 1100,960 980,880"],
  [F, S, "0,560 90,640 200,740 300,830 260,880 110,960 0,920"], [F, T, "0,590 50,600 90,680 160,720 230,790 200,850 90,850 0,750"], [F, U, "0,570 120,700 240,760 140,720 30,640"], [F, K, "70,1020 130,970 170,890 280,860 200,920 190,980 110,1040"], [F, P, "60,1060 200,1060 210,1190 60,1170"],
  [F, S, "560,1330 740,1220 900,1280 1040,1300 1100,1350 1240,1360 1240,1568 520,1568 530,1400"], [F, T, "680,1280 760,1230 780,1370 720,1400 620,1400"], [F, T, "850,1300 990,1350 1000,1400 880,1390"], [F, K, "600,1400 800,1420 700,1480 560,1460"], [F, K, "1100,1340 1300,1360 1500,1390 1480,1420 1140,1400"],
  [F, P, "240,1400 380,1380 380,1430 300,1420"], [F, P, "215,1330 260,1320 240,1360"], [F, N, "1460,1350 1505,1345 1505,1410 1490,1400"],
];

const water: [Sheet, string][] = [
  [A, "885,720 920,725 935,710 935,735 985,765 998,780 990,795 975,775 930,765 920,750 890,745"],
  [B, "940,580 955,570 980,605 945,590"], [B, "1125,725 1160,750 1205,725 1190,760 1165,785 1145,765"],
  [B, "290,940 330,938 330,985 310,990 290,965 305,955"], [C, "585,570 605,625 648,685 648,700 600,640"],
  [C, "1200,1568 1220,1540 1280,1550 1370,1530 1400,1500 1415,1510 1380,1550 1270,1565"],
  [D, "1200,570 1220,550 1265,550 1268,570 1250,590 1225,594"], [D, "450,1168 490,1145 490,1130 520,1140 592,1135 545,1160 485,1175"],
  [E, "1265,245 1290,265 1330,270 1370,240 1340,285 1350,318 1280,322 1280,285"], [E, "1490,375 1520,370 1568,395 1535,412 1490,405"],
  [F, "20,375 50,368 70,390 112,397 70,412 22,408"], [F, "320,365 368,345 368,368 340,398"], [F, "465,598 500,600 520,583 547,585 547,630 520,628 490,648 465,642"], [F, "115,635 140,615 195,648 165,650 178,678 160,675"], [F, "800,1220 820,1190 838,1250 820,1252"],
  [B, "530,1130 560,1090 610,1055 600,1080 550,1125"], [E, "1010,705 1015,660 1035,655 1020,690"], [E, "580,560 590,490 620,485 640,510 600,530"],
];

const rivers = [
  on(A, "118,175 180,155 260,145 300,150"), on(A, "385,155 455,195 495,245 515,288"),
  on(B, "655,1013 720,1000 800,962 910,966 1020,937 1045,950 1075,945"), on(B, "1100,930 1140,920 1170,895"), on(B, "1250,920 1295,912 1320,932 1430,900"),
  on(C, "10,932 145,900"), on(C, "1395,1520 1440,1450"),
];

const islands: [Sheet, string][] = [
  [G, "300,122 332,97 362,103 377,70 390,105 415,108 435,138 385,150 340,130"],
  [G, "500,163 570,165 600,140 645,145 692,125 692,180 735,203 758,200 765,248 730,252 690,285 622,312 565,275 530,200"],
  [G, "820,68 880,75 930,105 975,95 1025,112 1050,148 1135,155 1135,115 1170,98 1207,125 1180,175 1085,188 1020,227 910,222 860,190 862,130"],
  [E, "220,897 290,902 330,945 355,940 475,990 520,1065 545,1090 543,1135 480,1112 370,1105 350,1070 360,1020 350,970 325,965 260,950"],
  [E, "215,1510 250,1515 275,1568 240,1568"],
  [G, "1160,1178 1185,1180 1202,1165 1250,1195 1275,1210 1293,1240 1260,1252 1215,1240 1180,1225"],
];

const affected = [
  on(B, "199,247 269,247 269,277 388,277 388,308 428,308 428,370 734,370 734,403 847,403 1127,1098 1132,1170 1090,1170 1090,1272 948,1272 777,1402 766,1515 688,1488 525,1447 458,1417 378,1308 320,1176 278,1158 245,1127 170,1098 131,1049 157,977 196,941 184,912 200,892"),
  on(G, "1266,83 1297,77 1338,82 1377,72 1410,88 1428,110 1440,147 1434,187 1398,216 1343,238 1299,232 1241,194"),
  on(G, "1038,978 1063,984 1087,1002 1100,1025 1105,1052 1100,1080 1086,1105 1067,1122 1043,1129 1017,1122 995,1104 983,1081 978,1052 982,1026 997,1002"),
  on(G, "1143,1102 1213,1091 1300,1137 1355,1188 1372,1232 1370,1258 1354,1290 1299,1323 1256,1328 1222,1322 1166,1298 1124,1258 1103,1216 1098,1178 1109,1133 1123,1116"),
];

const roads = [
  on(A, "272,10 310,70 358,110 382,180 382,285 430,350 480,430 555,505 660,550 683,595 653,635 640,740 602,870 598,905 660,908 695,905 745,918 892,932 960,966 1075,955 1145,955 1185,985"),
  join(on(A, "1228,990 1250,983 1320,985 1375,997 1460,1045"), on(B, "210,1015 260,1057 300,1072 350,1115 400,1135")),
  on(B, "480,1165 530,1195 690,1205 790,1247 880,1262 935,1300 1022,1311 1060,1297 1105,1292 1160,1268 1245,1265 1320,1280 1425,1290 1480,1340 1520,1385 1568,1408"),
  on(B, "700,10 757,80 800,255 865,332 843,372 850,385 895,398 940,435 943,520 993,608 1033,632 1043,690 1105,750 1150,830 1190,910 1222,1003 1285,1048 1385,1178 1450,1197 1530,1280 1545,1320"),
  join(on(C, "265,1320 270,1350 330,1395 340,1440 335,1460"), on(E, "710,155 820,305 965,405 1040,500 1120,560 1190,665 1250,730 1252,820 1270,862 1250,905 1315,955 1360,1025 1420,1070 1460,1110"), on(F, "0,1118 100,1250 150,1320 190,1410 250,1568")),
  on(C, "0,1057 38,1057 105,1113 178,1130 208,1165 275,1182 330,1213 368,1222 412,1260 413,1293 560,1298 620,1320 705,1322 728,1337 822,1337"),
  on(B, "1285,1055 1340,1057"),
  join(on(B, "1320,1098 1318,1280 1305,1340 1315,1390"), on(E, "440,185 475,215 475,312 510,350 570,370 620,410 655,413 700,430 760,455 790,483 848,487 930,570 975,600 1040,607 1090,630 1190,665")),
  on(E, "340,155 375,135 480,122 580,120 618,138 640,125"),
  join(on(E, "662,95 740,72 830,72 885,82 1035,72 1100,82 1165,68 1285,50 1335,78 1460,80"), on(F, "0,80 310,80 345,90 370,122 458,158 485,205 555,270 690,276 728,266 768,285 940,279 1050,305 1100,350")),
  on(F, "1210,435 1310,500 1370,533 1410,538 1435,558 1520,582"),
  on(E, "583,125 575,250 568,430 577,490 563,522"), on(E, "708,70 692,170 700,240 685,300 658,380 657,490 618,510"),
  on(E, "895,40 880,110 820,170 780,250 772,330 790,400 788,480"), on(E, "440,265 498,265 512,273 640,270 695,295 775,291"),
  on(D, "1115,38 1075,65 920,128 700,220"),
  join(on(D, "420,266 352,270 330,290 302,380 225,450 175,520 160,600 100,700 42,750 30,790"), on(C, "1450,850 1325,1025 1275,1028 1278,1055 1312,1100 1318,1153 1370,1195 1450,1255 1505,1325 1512,1412")),
  join(on(C, "1370,1195 1362,1222 1200,1370"), on(E, "1390,150 1382,310 1412,410 1470,490"), on(F, "25,510 70,540 120,550 205,640 265,730 335,797 380,890 383,935 343,1012 355,1050 362,1120 368,1155 362,1198 417,1325 420,1385 458,1450 450,1568")),
  on(F, "205,80 205,100 145,175 170,215 205,245 280,450 322,500 328,570 343,605 345,670 337,797"),
  on(D, "480,290 870,362 1205,428 1275,475 1390,492 1520,492"),
];

const yellowRoads = [
  on(A, "430,350 480,430 555,505 660,550 683,595 653,635"), on(A, "602,870 598,905 660,908 695,905 745,918"), on(A, "892,932 960,966"),
];

type Label = [string, number, number, string];
const labels: Label[] = [
  ["Santa Maria", 1778, 839, "town"], ["Lompoc", 1769, 1011, "small"], ["Santa Barbara", 2101, 1124, "town"],
  ["Oxnard", 2331, 1244, "town"], ["Santa Clarita", 2608, 1129, "town"], ["Lancaster", 2792, 977, "town"],
  ["Victorville", 3164, 1063, "town"], ["Riverside", 3128, 1358, "town"], ["Long Beach", 2767, 1471, "town"],
  ["Irvine", 2929, 1515, "town"], ["Oceanside", 3125, 1774, "town"], ["Los Angeles", 2746, 1313, "metro"],
  ["Los Padres", 2171, 1014, "park"], ["National Forest", 2171, 1054, "park"],
  ["Channel Islands", 1925, 1439, "park"], ["National Park", 1925, 1479, "park"],
];

const dots = [[1778, 856, 5], [1768, 1025, 5], [2101, 1141, 6], [2331, 1261, 7], [2607, 1146, 6], [2792, 994, 6], [3164, 1081, 5], [3127, 1375, 6], [2767, 1488, 6], [2929, 1532, 6], [3125, 1790, 6], [2744, 1337, 7]];

const interstate = (x: number, y: number, num: string) => svg`
  <g transform="translate(${x} ${y})">
    <path class="halo" d="M-22,-23 L-18,-26 Q-9,-22 0,-26 Q9,-22 18,-26 L22,-23 C28,-4 22,16 0,24 C-22,16 -28,-4 -22,-23 Z"/>
    <path fill="#f03434" d="M-24,-13 C-24,-18 -23,-20 -21,-25 Q-18,-19 -12,-20 Q-3,-20 0,-25 Q3,-20 12,-20 Q18,-19 21,-25 C23,-20 24,-18 24,-13 Z"/>
    <path fill="#465ccf" d="M-25,-11 H25 C26,6 16,18 0,24 C-16,18 -26,6 -25,-11 Z"/>
    <text class="shield-num" y="11">${num}</text>
  </g>`;

const tree = (x: number, y: number) => svg`
  <g transform="translate(${x} ${y})">
    <circle r="21.500" fill="#fff"/><circle r="19.500" fill="#34ad1e"/>
    <path fill="#fff" d="M-5,-9 C-4,-12 3,-13 6,-9 C10,-9 12,-4 10,-1 C12,3 6,4 3,2 L2,2 L2,9 C4,9 5,10 5,11 H-4 C-4,10 -2,9 -1,9 L-1,3 L-4,1 C-8,4 -12,0 -9,-3 C-11,-7 -8,-9 -5,-9 Z"/>
  </g>`;

@customElement("disaster-map")
export class DisasterMap extends LitElement {
  static styles = css`
    :host { display: block; position: relative; height: 1100px; border-radius: 44px; overflow: hidden; background: #77d1ff; font-family: Inter, "Liberation Sans", sans-serif; }
    .canvas { display: block; width: 100%; height: 100%; }
    .casing, .road, .road-alt, .river { fill: none; stroke-linejoin: round; }
    .casing { stroke: #fdf8f2; stroke-width: 8; }
    .road { stroke: #f9a350; stroke-width: 4; }
    .road-alt { stroke: #eac821; stroke-width: 4; }
    .river { stroke: #99deff; stroke-width: 3; }
    .affected { fill: #ff5f5f; fill-opacity: 0.2; stroke: #ff6467; stroke-width: 3; stroke-linejoin: round; }
    .halo { fill: #fff; stroke: #fff; stroke-width: 4; }
    .label { font-family: Roboto, "Liberation Sans", sans-serif; text-anchor: middle; paint-order: stroke; stroke: #fff; stroke-opacity: 0.75; stroke-width: 5; stroke-linejoin: round; }
    .town { font-size: 33px; fill: #3a3c40; }
    .small { font-size: 29px; fill: #4c4e52; }
    .metro { font-size: 45px; font-weight: 500; fill: #000; }
    .park { font-size: 31px; font-weight: 500; fill: #368a28; }
    .dot { fill: #000; stroke: #fff; stroke-width: 2; }
    .shield-num { font: 700 25px Roboto, "Liberation Sans", sans-serif; text-anchor: middle; fill: #fff; }
    .us-num { font: 700 28px Roboto, "Liberation Sans", sans-serif; text-anchor: middle; fill: #3a3c52; }
    .legend { position: absolute; top: 44px; right: 44px; display: flex; align-items: center; gap: 22px; height: 88px; padding: 0 22px 0 20px; border-radius: 22px; background: #fff; box-sizing: border-box; font-size: 33px; line-height: 44px; color: #1f1f1f; }
    .swatch { width: 40px; height: 40px; box-sizing: border-box; border: 2px solid #ff6467; border-radius: 11px; background: #ffdfdf; }
    .zoom { position: absolute; right: 26px; bottom: 82px; display: grid; gap: 22px; }
    .zoom-btn { display: grid; place-items: center; width: 110px; height: 110px; padding: 0; border: 0; border-radius: 50%; background: #fff; cursor: pointer; }
    .zoom-icon { width: 46px; height: 46px; stroke: #111; stroke-width: 5; }
    .credits { position: absolute; right: 0; bottom: 0; display: flex; gap: 8px; height: 54px; padding: 0 13px; align-items: center; background: rgba(255, 255, 255, 0.5); font: 34px/44px "Liberation Sans", Arial, sans-serif; }
    .credit { color: rgba(0, 0, 0, 0.75); text-decoration: none; }
    .improve { font-size: 33px; font-weight: 700; margin-left: 4px; }
    .brand { position: absolute; left: 19px; bottom: 18px; display: flex; align-items: center; gap: 2px; text-decoration: none; }
    .brand-mark { width: 58px; height: 58px; }
    .brand-word { width: 200px; height: 70px; overflow: visible; font: 700 48px Lato, "Open Sans", sans-serif; }
    .brand-text { fill: #fff; stroke: #4f93b6; stroke-width: 6; stroke-linejoin: round; paint-order: stroke; }
  `;

  render() {
    return html`
      <svg class="canvas" viewBox="974 796 2702 1100" preserveAspectRatio="xMidYMid slice" role="img" aria-label="Map of Southern California">
        <defs><clipPath id="land"><polygon points=${land} /></clipPath></defs>
        ${seaBands.map(([fill, p]) => svg`<polygon fill=${fill} points=${p} />`)}
        <polygon points=${land} fill="#8fd1ef" transform="translate(-3 7)" opacity=".6" />
        <polygon points=${land} fill="#cbeac5" />
        <g clip-path="url(#land)">
          ${cities.map((p) => svg`<polygon fill="#f5f5f4" points=${p} />`)}
          ${terrain.map(([s, fill, p]) => svg`<polygon fill=${fill} fill-opacity=".8" points=${on(s, p)} />`)}
          ${cities.slice(1).map((p) => svg`<polygon fill="#f5f5f4" fill-opacity=".9" points=${p} />`)}
        </g>
        ${water.map(([s, p]) => svg`<polygon fill="#99deff" points=${on(s, p)} />`)}
        ${rivers.map((p) => svg`<polyline class="river" points=${p} />`)}
        ${islands.map(([s, p]) => svg`<polygon fill="#7fbcd8" fill-opacity=".5" transform="translate(4 7)" points=${on(s, p)} /><polygon fill="#c6e4bb" points=${on(s, p)} />`)}
        <polygon fill="#cbeac5" points=${on(G, "870,150 960,130 1050,180 1000,215 900,212")} />
        <polygon fill="#bcd9b0" points=${on(G, "880,85 930,105 975,95 1025,112 1040,165 960,135 890,120")} />
        <polygon fill="#cbeac5" points=${on(E, "350,975 440,985 470,1050 490,1100 380,1095 365,1060")} />
        <polygon fill="#ccd3b0" points=${on(E, "355,942 475,990 520,1065 543,1090 543,1135 480,1112 500,1085 455,1020 450,990")} />
        ${roads.map((p) => svg`<polyline class="casing" points=${p} />`)}
        ${roads.map((p) => svg`<polyline class="road" points=${p} />`)}
        ${yellowRoads.map((p) => svg`<polyline class="road-alt" points=${p} />`)}
        <g transform="translate(1884 1076)">
          <path fill="#fff" stroke="#2b2d3f" stroke-width="3" stroke-linejoin="round" d="M-26,-24 Q-18,-18 -10,-22 Q-4,-20 0,-24 Q4,-20 10,-22 Q18,-18 26,-24 L34,-17 Q29,-10 33,0 C36,14 26,22 14,21 Q4,21 0,25 Q-4,21 -14,21 C-26,22 -36,14 -33,0 Q-29,-10 -34,-17 Z" />
          <text class="us-num" y="10">101</text>
        </g>
        ${interstate(3304, 879, "15")} ${interstate(3540, 1450, "10")} ${interstate(3555, 789, "15")}
        ${tree(2172, 958)} ${tree(1924, 1382)}
        ${dots.map(([x, y, r]) => svg`<circle class="dot" cx=${x} cy=${y} r=${r + 1} />`)}
        ${labels.map(([t, x, y, kind]) => svg`<text class="label ${kind}" x=${x} y=${y}>${t}</text>`)}
        ${affected.map((p) => svg`<polygon class="affected" points=${p} />`)}
      </svg>
      <div class="legend"><span class="swatch"></span><span>Affected area</span></div>
      <div class="zoom">
        <button class="zoom-btn" type="button" aria-label="Zoom in"><svg class="zoom-icon" viewBox="0 0 46 46"><path d="M23 0V46M0 23H46" /></svg></button>
        <button class="zoom-btn" type="button" aria-label="Zoom out"><svg class="zoom-icon" viewBox="0 0 46 46"><path d="M0 23H46" /></svg></button>
      </div>
      <a class="brand" href="#mapbox" aria-label="Mapbox">
        <svg class="brand-mark" viewBox="0 0 58 58"><circle cx="29" cy="29" r="27" fill="#f4fafe" stroke="#4f93b6" stroke-width="3.500" /><path fill="#4f93b6" d="M17,42 C15,30 16,22 22,17 C30,11 41,15 44,23 C47,32 41,40 33,42 C28,43 22,43 17,42 Z" /><path fill="#fff" d="M32,18 L34.500,24.500 L41,27 L34.500,29.500 L32,36 L29.500,29.500 L23,27 L29.500,24.500 Z" /></svg>
        <svg class="brand-word" viewBox="0 0 200 70"><text class="brand-text" x="4" y="47">mapbox</text></svg>
      </a>
      <div class="credits">
        <a class="credit" href="#mapbox">© Mapbox</a><a class="credit" href="#osm">© OpenStreetMap</a><a class="credit improve" href="#improve">Improve this map</a>
      </div>
    `;
  }
}

@customElement("notice-card")
export class NoticeCard extends LitElement {
  @property() kind: "warning" | "info" = "info";
  @property() heading = "";

  static styles = css`
    :host { display: block; }
    .card { display: flex; gap: 44px; padding: 46px 44px 47px; border-radius: 44px; background: #f4f4f4; }
    .warning { background: #fffad4; }
    .icon { flex: none; width: 66px; height: 66px; }
    .text { display: grid; gap: 8px; font-size: 38px; line-height: 55px; color: #262626; }
    .heading { margin: 0; font-size: 44px; line-height: 64px; font-weight: 600; color: #1b1b1b; }
  `;

  render() {
    const icon =
      this.kind === "warning"
        ? svg`<path fill="#ffd600" d="M33,7 C37,7 39,9 41,12 L58,44 C61,50 58,57 51,57 H15 C8,57 5,50 8,44 L25,12 C27,9 29,7 33,7 Z"/><path stroke="#fffad4" stroke-width="5" stroke-linecap="round" d="M33 21V34"/><circle cx="33" cy="43" r="3" fill="#fffad4"/>`
        : svg`<circle cx="33" cy="32" r="28" fill="#4f9cf5"/><path stroke="#fff" stroke-width="5" stroke-linecap="round" d="M33 31V43"/><circle cx="33" cy="21" r="3.500" fill="#fff"/>`;
    return html`
      <section class="card ${this.kind}">
        <svg class="icon" viewBox="0 0 66 66" aria-hidden="true">${icon}</svg>
        <div class="text"><h2 class="heading">${this.heading}</h2><slot></slot></div>
      </section>
    `;
  }
}

@customElement("impact-card")
export class ImpactCard extends LitElement {
  static styles = css`
    :host { display: block; box-sizing: border-box; border: 5px solid #0a73f5; border-radius: 44px; background: #fff; box-shadow: 0 9px 48px rgba(0, 0, 0, 0.07); color: #1b1b1b; font-size: 33px; }
    .top { display: flex; justify-content: space-between; align-items: center; padding: 28px 39px 34px; line-height: 40px; border-bottom: 4px solid #efefef; }
    .country { display: flex; align-items: center; gap: 14px; font-weight: 600; }
    .flag { width: 40px; height: 40px; }
    .body { display: flex; flex-direction: column; align-items: flex-start; padding: 44px 39px 46px; }
    .badge { margin-bottom: 42px; padding: 0 22px; border-radius: 11px; background: #ffec29; line-height: 66px; font-weight: 600; }
    .caption { margin: 0; line-height: 44px; color: #8f8f8f; }
    .score { display: flex; align-items: center; margin: 12px 0 44px; }
    .num { display: grid; place-items: center; width: 88px; height: 88px; margin-right: 22px; border-radius: 50%; background: #8ee396; font-size: 55px; font-weight: 700; color: #000; }
    .level { font-size: 66px; line-height: 88px; font-weight: 700; }
    .help { width: 44px; height: 44px; margin: 10px 0 0 16px; padding: 0; border: 0; border-radius: 50%; background: #d6d6d6; color: #fff; font: 500 33px/44px Inter, sans-serif; }
    .advice { margin: 6px 0 0; font-size: 44px; line-height: 55px; font-weight: 600; }
  `;

  render() {
    const stars = [];
    for (let r = 0; r < 6; r++) for (let c = 0; c < 7; c++) stars.push(svg`<circle cx=${3 + c * 4 + (r % 2) * 2} cy=${3 + r * 3.6} r=".8" fill="#c9d0e4" />`);
    return html`
      <div class="top">
        <span>2023-12</span>
        <span class="country">
          <svg class="flag" viewBox="0 0 40 40" aria-hidden="true">
            <defs><clipPath id="round"><circle cx="20" cy="20" r="20" /></clipPath></defs>
            <g clip-path="url(#round)">
              <rect width="40" height="40" fill="#fff" />
              ${[0, 1, 2, 3, 4, 5, 6].map((i) => svg`<rect y=${i * 6.2} width="40" height="3" fill="#cf3340" />`)}
              <rect width="31" height="21.500" fill="#1f2f66" />${stars}
            </g>
            <circle cx="20" cy="20" r="19.500" fill="none" stroke="#e9e9ec" />
          </svg>
          United States
        </span>
      </div>
      <div class="body">
        <span class="badge">Flood</span>
        <p class="caption">Impact score</p>
        <div class="score"><span class="num">1</span><span class="level">Low</span><button class="help" type="button" aria-label="About the impact score">?</button></div>
        <p class="caption">Advice for possible damage</p>
        <p class="advice">Check for water damage</p>
      </div>
    `;
  }
}

@customElement("app-root")
export class AppRoot extends LitElement {
  static styles = css`
    :host { display: block; min-height: 100vh; box-sizing: border-box; background: #fff; font-family: Inter, "Liberation Sans", sans-serif; }
    .page { display: grid; grid-template-columns: 705px minmax(0, 1fr); column-gap: 110px; padding: 79px 74px 48px 70px; }
    .title { margin: 0 0 44px; font-size: 88px; line-height: 108px; font-weight: 700; color: #1f1f1f; }
    .lead { margin: 0; padding-right: 44px; font-size: 38px; line-height: 55px; color: #8c8c8c; }
    .content { display: flex; flex-direction: column; gap: 44px; }
    .line { margin: 0; }
    .list { margin: 0; padding-left: 44px; }
    .panel { display: flex; flex-direction: column; align-items: center; gap: 66px; margin-top: 44px; padding: 89px; border-radius: 44px; background: #f9f9f9; }
    .map { width: 100%; }
    .impact { width: 50%; }
  `;

  render() {
    return html`
      <main class="page">
        <header><h1 class="title">Natural disaster</h1><p class="lead">Has the vehicle's location been recorded in the area of a natural disaster?</p></header>
        <div class="content">
          <notice-card kind="warning" heading="Beware"><p class="line">This vehicle's location was recorded in the area of a flood</p></notice-card>
          <notice-card kind="info" heading="Note">
            <ul class="list"><li>Be on the lookout for water damage when inspecting the vehicle!</li><li>This location record doesn't necessarily mean the vehicle was directly affected</li></ul>
          </notice-card>
          <section class="panel"><disaster-map class="map"></disaster-map><impact-card class="impact"></impact-card></section>
        </div>
      </main>
    `;
  }
}
